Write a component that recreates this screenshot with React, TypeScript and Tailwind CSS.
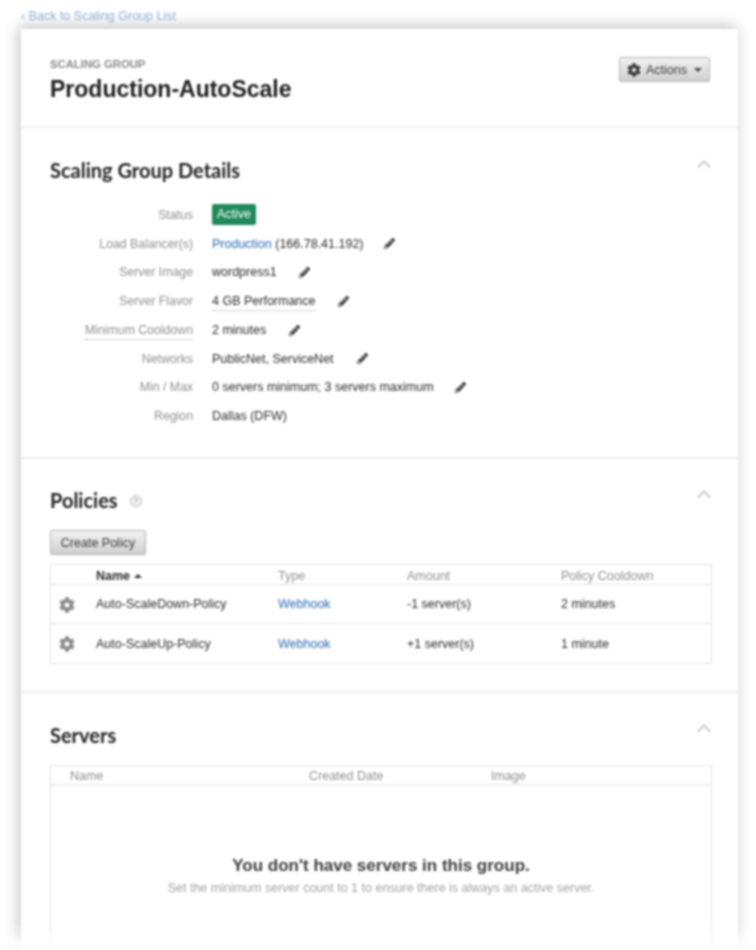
import { ChevronUp } from 'lucide-react';
import { FaCog, FaPencilAlt } from 'react-icons/fa';

const details = [
  { label: 'Load Balancer(s)', value: <><a className="text-[#2a6ab0]">Production</a> (166.78.41.192)</>, gap: 'ml-[20px]' },
  { label: 'Server Image', value: 'wordpress1', gap: 'ml-[22px]' },
  { label: 'Server Flavor', value: <span className="border-b border-dotted border-[#aaa] pb-[2px]">4 GB Performance</span>, gap: 'ml-[22px]' },
  { label: 'Minimum Cooldown', value: '2 minutes', gap: 'ml-[23px]', underline: true },
  { label: 'Networks', value: 'PublicNet, ServiceNet', gap: 'ml-[23px]' },
  { label: 'Min / Max', value: '0 servers minimum; 3 servers maximum', gap: 'ml-[21px]' },
  { label: 'Region', value: 'Dallas (DFW)' },
];

const policies = [
  { name: 'Auto-ScaleDown-Policy', amount: '-1 server(s)', cooldown: '2 minutes' },
  { name: 'Auto-ScaleUp-Policy', amount: '+1 server(s)', cooldown: '1 minute' },
];

const headingCls = "font-['Lato',sans-serif] text-[20px] font-bold leading-[30px] text-[#222]";

export default function App() {
  return (
    <div className="relative h-[950px] overflow-hidden bg-white font-['Liberation_Sans',sans-serif] text-[12.5px] text-[#2b2b2b] blur-[0.8px]">
      <div className="flex h-[29px] items-center pl-[21px] pt-[4px] text-[12.5px] text-[#8fb0d8]">
        ‹ Back to Scaling Group List
      </div>

      <div className="ml-[21px] h-[921px] w-[717px] bg-white shadow-[-2px_-3px_14px_rgba(0,0,0,0.24)]">
        {/* Заголовок */}
        <div className="flex h-[99px] justify-between border-b-2 border-[#eeeeee] pl-[29px] pr-[28px] pt-[29px]">
          <div>
            <div className="text-[11.3px] font-bold leading-[13px] text-[#8a8a8a]">SCALING GROUP</div>
            <h1 className="mt-[3px] text-[23px] font-bold leading-[30px] text-[#1c1c1c]">Production-AutoScale</h1>
          </div>
          <button className="-mt-[1px] flex h-[25px] w-[91px] items-center justify-center gap-[5px] rounded-[2px] border border-[#b5b5b5] bg-gradient-to-b from-[#f2f2f2] to-[#cfcfcf] pt-[1px] text-[12.5px] text-[#3a3a3a]">
            <FaCog size={14} className="text-[#3a3a3a]" />
            Actions
            <span className="ml-[2px] h-0 w-0 border-x-[4px] border-t-[4px] border-x-transparent border-t-[#444]" />
          </button>
        </div>

        {/* Scaling Group Details */}
        <section className="h-[331px] border-b-2 border-[#eeeeee] pl-[29px] pr-[26px] pt-[27px]">
          <div className="flex items-start justify-between">
            <h2 className={headingCls}>Scaling Group Details</h2>
            <ChevronUp className="-mr-[3px] -mt-[2px] text-[#cfcfcf]" size={22} strokeWidth={2.5} />
          </div>
          <div className="mt-[15px]">
            <div className="flex h-[29.5px] items-center">
              <div className="w-[143px] text-right text-[12.3px] text-[#8f8f8f]">Status</div>
              <span className="ml-[19px] rounded-[2px] bg-[#20895c] px-[5px] py-[2px] leading-[17px] text-white">Active</span>
            </div>
            {details.map((row) => (
              <div key={row.label} className="flex h-[28.75px] items-center">
                <div className="w-[143px] text-right text-[12.3px] text-[#8f8f8f]">
                  <span className={row.underline ? 'border-b border-dotted border-[#aaa] pb-[2px]' : ''}>{row.label}</span>
                </div>
                <div className="ml-[19px]">{row.value}</div>
                {row.gap && <FaPencilAlt size={11} className={`${row.gap} text-[#333]`} />}
              </div>
            ))}
          </div>
        </section>

        {/* Policies */}
        <section className="h-[234px] border-b-2 border-[#eeeeee] pl-[29px] pr-[26px] pt-[26px]">
          <div className="flex items-start justify-between">
            <div className="flex items-center">
              <h2 className={headingCls}>Policies</h2>
              <span className="ml-[12px] mt-[2px] flex h-[12px] w-[12px] items-center justify-center rounded-full border border-[#bbb] bg-[#f2f2f2] text-[8px] text-[#888]">?</span>
            </div>
            <ChevronUp className="-mr-[3px] -mt-[2px] text-[#cfcfcf]" size={22} strokeWidth={2.5} />
          </div>
          <button className="mt-[15px] flex h-[25px] w-[96px] items-center justify-center rounded-[2px] border border-[#b5b5b5] bg-gradient-to-b from-[#f2f2f2] to-[#cfcfcf] pt-[2px] text-[12.5px] text-[#3a3a3a]">
            Create Policy
          </button>
          <div className="mt-[9px] w-[662px] border border-[#e2e2e2]">
            <div className="grid h-[20px] grid-cols-[45px_182px_129px_154px_1fr] items-center border-b border-[#e2e2e2] pt-[2px] text-[#8f8f8f]">
              <div />
              <div className="flex items-center gap-[4px] font-bold text-[#2b2b2b]">
                Name
                <span className="h-0 w-0 border-x-[4px] border-b-[4px] border-x-transparent border-b-[#333]" />
              </div>
              <div>Type</div>
              <div>Amount</div>
              <div>Policy Cooldown</div>
            </div>
            {policies.map((p, i) => (
              <div key={p.name} className={`grid h-[39px] grid-cols-[45px_182px_129px_154px_1fr] items-center pt-[1px] ${i === 0 ? 'border-b border-[#e2e2e2]' : ''}`}>
                <FaCog size={16} className="ml-[8px] text-[#8c8c8c]" />
                <div>{p.name}</div>
                <div className="text-[#2a6ab0]">Webhook</div>
                <div>{p.amount}</div>
                <div>{p.cooldown}</div>
              </div>
            ))}
          </div>
        </section>

        {/* Servers */}
        <section className="pl-[29px] pr-[26px] pt-[27px]">
          <div className="flex items-start justify-between">
            <h2 className={headingCls}>Servers</h2>
            <ChevronUp className="-mr-[3px] -mt-[3px] text-[#cfcfcf]" size={22} strokeWidth={2.5} />
          </div>
          <div className="mt-[15px] h-[300px] w-[662px] border border-[#e2e2e2]">
            <div className="grid h-[20px] grid-cols-[19px_239px_182px_1fr] items-center border-b-2 border-[#eeeeee] pt-[1px] text-[#8f8f8f]">
              <div />
              <div>Name</div>
              <div>Created Date</div>
              <div>Image</div>
            </div>
            <div className="pt-[70px] text-center">
              <div className="text-[17px] font-bold leading-[20px] text-[#3c3c3c]">You don't have servers in this group.</div>
              <div className="mt-[3px] text-[12.5px] text-[#a4a4a4]">Set the minimum server count to 1 to ensure there is always an active server.</div>
            </div>
          </div>
        </section>
      </div>

      {/* Нижний край растворяется в белом */}
      <div className="absolute inset-x-0 bottom-0 h-[26px] bg-gradient-to-b from-transparent to-white" />
    </div>
  );
}
